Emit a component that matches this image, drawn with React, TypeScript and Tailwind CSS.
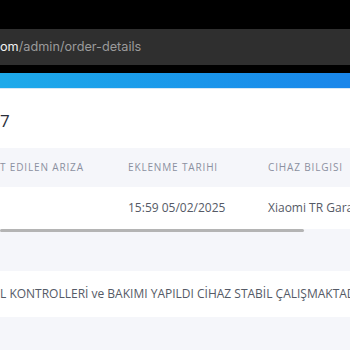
export default function App() {
  return (
    <div className="w-[350px] h-[350px] overflow-hidden bg-white font-['Open_Sans',sans-serif]">
      <div className="h-[29px] bg-black" />
      <div className="h-[36px] bg-[#2f2f2f] flex items-center text-[12.7px] font-['Inter',sans-serif] whitespace-nowrap">
        <span className="text-[#f2f2f2]">om</span>
        <span className="text-[#9b9b9b]">/admin/order-details</span>
      </div>
      <div className="h-[8px] bg-black" />
      <div className="h-[15px] bg-gradient-to-r from-[#1eaaea] to-[#1a86ea]" />
      <div className="h-px bg-[#d6e8f6]" />

      <div className="h-[59px] flex items-center pt-1">
        <span className="text-[17px] font-medium text-[#2a2e3a] leading-none">7</span>
      </div>

      <div className="h-[39px] bg-[#f5f6fa] grid grid-cols-[128px_140px_1fr] items-center text-[10px] tracking-[0.85px] text-[#8b90a0] whitespace-nowrap">
        <span>T EDILEN ARIZA</span>
        <span>EKLENME TARIHI</span>
        <span>CIHAZ BILGISI</span>
      </div>
      <div className="h-[42px] bg-white grid grid-cols-[128px_140px_1fr] items-center text-[12px] text-[#555a66] whitespace-nowrap overflow-hidden">
        <span />
        <span>15:59 05/02/2025</span>
        <span>Xiaomi TR Garanti</span>
      </div>
      <div className="h-[5px] bg-[#f5f6fa] flex items-start">
        <div className="w-[304px] h-[3px] rounded-full bg-[#b4b4b4]" />
      </div>

      <div className="h-[37px] bg-[#f5f6fa]" />
      <div className="h-[46px] bg-white flex items-center text-[12px] text-[#555a66] whitespace-nowrap overflow-hidden">
        L KONTROLLERİ ve BAKIMI YAPILDI CİHAZ STABİL ÇALIŞMAKTADIR
      </div>
      <div className="h-[40px] bg-[#f5f6fa]" />
    </div>
  );
}
